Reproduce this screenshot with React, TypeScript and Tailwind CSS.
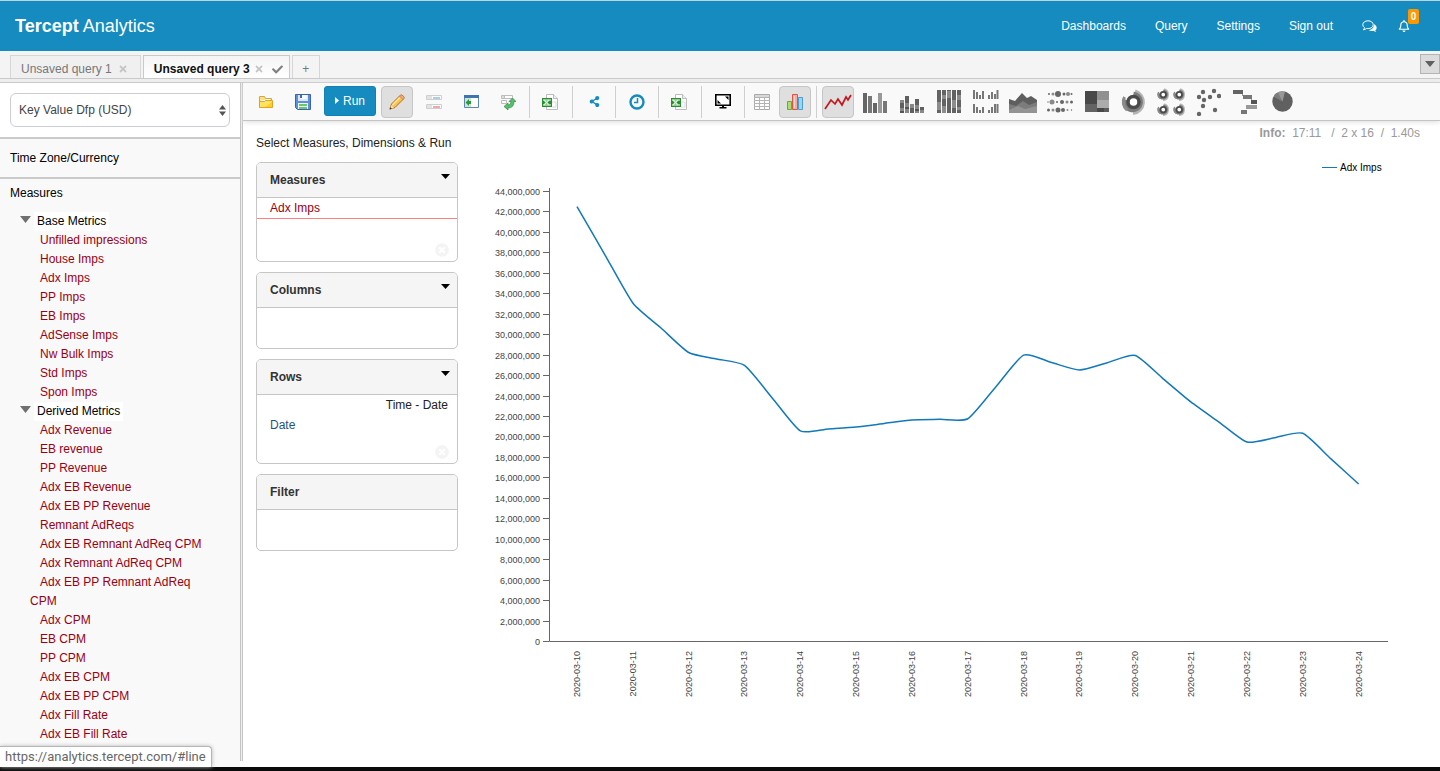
import React from 'react';
import clsx from 'clsx';
import { FaCheck, FaRegBell, FaShareAlt, FaTimes, FaTimesCircle } from 'react-icons/fa';

const baseMetrics = [
  'Unfilled impressions',
  'House Imps',
  'Adx Imps',
  'PP Imps',
  'EB Imps',
  'AdSense Imps',
  'Nw Bulk Imps',
  'Std Imps',
  'Spon Imps',
];

const derivedMetrics = [
  'Adx Revenue',
  'EB revenue',
  'PP Revenue',
  'Adx EB Revenue',
  'Adx EB PP Revenue',
  'Remnant AdReqs',
  'Adx EB Remnant AdReq CPM',
  'Adx Remnant AdReq CPM',
  'Adx EB PP Remnant AdReq CPM',
  'Adx CPM',
  'EB CPM',
  'PP CPM',
  'Adx EB CPM',
  'Adx EB PP CPM',
  'Adx Fill Rate',
  'Adx EB Fill Rate',
];

// Adx Imps per day, in millions
const series = [
  { date: '2020-03-10', value: 42.53 },
  { date: '2020-03-11', value: 33.1 },
  { date: '2020-03-12', value: 28.26 },
  { date: '2020-03-13', value: 26.99 },
  { date: '2020-03-14', value: 20.6 },
  { date: '2020-03-15', value: 20.97 },
  { date: '2020-03-16', value: 21.66 },
  { date: '2020-03-17', value: 21.78 },
  { date: '2020-03-18', value: 28.0 },
  { date: '2020-03-19', value: 26.55 },
  { date: '2020-03-20', value: 27.97 },
  { date: '2020-03-21', value: 23.4 },
  { date: '2020-03-22', value: 19.5 },
  { date: '2020-03-23', value: 20.36 },
  { date: '2020-03-24', value: 15.4 },
];

/* ---------- toolbar icons ---------- */

function FolderIcon() {
  return (
    <svg width="16" height="16" viewBox="0 0 16 16">
      <path d="M1.5 13.5v-11h5l1 2h6v9z" fill="#fbe08a" stroke="#d9a436" />
      <path d="M3 6.5h4l1-1h4" fill="none" stroke="#fff" />
      <path d="M1.5 13.5v-6h5l1-1h7v7z" fill="#ffe25e" stroke="#dfa22c" />
      <path d="M7 13l7-5v5z" fill="#ffcf1f" />
    </svg>
  );
}

function SaveIcon() {
  return (
    <svg width="16" height="16" viewBox="0 0 16 16">
      <path d="M.5.5h15v15h-13l-2-2z" fill="#5d8fdc" stroke="#3a62b0" />
      <path d="M3 1h10v6H3z" fill="#dce8fa" />
      <path d="M5 1h7v4H5z" fill="#f6f9ff" />
      <path d="M5 1h2v3H5z" fill="#3f68b5" />
      <path d="M3 9h10v6H3z" fill="#eef5ee" />
      <path d="M4 10h8v2H4zM4 13h8v2H4z" fill="#6cc66a" />
    </svg>
  );
}

function PencilIcon() {
  return (
    <svg width="16" height="16" viewBox="0 0 16 16">
      <path d="M1 15l1.5-5L11 1.5q1.5-1 3 .5t.5 3L6 13.5z" fill="#f8c34a" stroke="#b5712a" />
      <path d="M3.5 11L11 3.5" stroke="#ffe9a0" strokeWidth="1.5" />
      <path d="M10.5 2l3.5 3.5 1-1q.5-1.5-.8-2.7T11.5 1z" fill="#f0a890" stroke="#b5712a" strokeWidth=".6" />
      <path d="M1 15l1.3-4L5 13.700z" fill="#f3dcb4" />
      <path d="M.5 15.5l.8-2.3 1.5 1.5z" fill="#333" />
    </svg>
  );
}

function FieldsIcon() {
  return (
    <svg width="16" height="14" viewBox="0 0 16 14">
      <path d="M.5.5h15v4H.5zM.5 9.5h15v4H.5z" fill="#fff" stroke="#cfcfcf" />
      <path d="M1 1h5v3H1zM1 10h5v3H1z" fill="#e2e2e2" />
      <path d="M7 2h7v2H7z" fill="#a9cfea" />
      <path d="M7 11h7v2H7z" fill="#f0a8a8" />
    </svg>
  );
}

function CollapseIcon() {
  return (
    <svg width="15" height="13" viewBox="0 0 15 13">
      <path d="M.5.5h14v12H.5z" fill="#fff" stroke="#5b86b8" />
      <path d="M0 0h15v3H0z" fill="#3f74ad" />
      <path d="M1 3h6v9H1z" fill="#cfe6cf" />
      <path d="M1.5 7.5L5 4v2h2v3H5v2z" fill="#2a9a3a" />
    </svg>
  );
}

function SwapIcon() {
  return (
    <svg width="16" height="16" viewBox="0 0 16 16">
      <path d="M1.5 1.5h11v3h-11zM1.5 6.5h5v3h-5zM4.5 1.5v3" fill="#fff" stroke="#bdbdbd" />
      <path d="M2 2h2v2H2z" fill="#ddd" />
      <path d="M4 12.5L8 9v2q3 0 3-3.5H9L12.5 4 16 7.5h-2Q14 14 8 14v2z" fill="#58bd6c" stroke="#2f8f48" strokeWidth=".7" />
    </svg>
  );
}

function ExcelIcon() {
  return (
    <svg width="18" height="16" viewBox="0 0 18 16">
      <path d="M4.5.5h7l4 4v11h-11z" fill="#fff" stroke="#bcbcbc" />
      <path d="M11.5.5v4h4" fill="#eee" stroke="#bcbcbc" />
      <path d="M10 8h4v5h-4" fill="none" stroke="#d4e2d4" />
      <path d="M0 4h10v9H0z" fill="#2c8b35" />
      <path d="M1 5h8v2H1zM1 10h8v2H1z" fill="#8fcb8d" />
      <path d="M2 6l5 5M7 6l-5 5" stroke="#d9efd9" strokeWidth="1.4" />
    </svg>
  );
}

function ClockIcon() {
  return (
    <svg width="16" height="16" viewBox="0 0 16 16" fill="none" stroke="#158bc0">
      <circle cx="8" cy="8" r="6.5" strokeWidth="2.4" />
      <path d="M8.500 4v4.500H5" strokeWidth="1.5" />
    </svg>
  );
}

function FullscreenIcon() {
  return (
    <svg width="16" height="15" viewBox="0 0 16 15">
      <path d="M.8.8h14.4v10.4H.8z" fill="#fff" stroke="#000" strokeWidth="1.6" />
      <path d="M10 2.500h3.500V6zM2.500 6v3.500H6z" fill="#000" />
      <path d="M7 11h2v2h2.5v1.5h-7V13H7z" fill="#000" />
    </svg>
  );
}

function TableIcon() {
  return (
    <svg width="16" height="16" viewBox="0 0 16 16">
      <path d="M.5.5h15v15H.5z" fill="#fff" stroke="#aaa" />
      <path d="M1 1h14v2H1z" fill="#d8d8d8" />
      <path d="M0 3.5h16M0 6.5h16M0 9.5h16M0 12.5h16M5.5 3v13M10.5 3v13" stroke="#b4b4b4" />
    </svg>
  );
}

function ColorBarsIcon() {
  return (
    <svg width="16" height="16" viewBox="0 0 16 16">
      <path d="M.5 7.5h4v8h-4z" fill="#a4e070" stroke="#5fae35" />
      <path d="M11.5 3.5h4v12h-4z" fill="#9bd5f2" stroke="#4a9fd0" />
      <path d="M5.5.5h5v15h-5z" fill="#fbaaa0" stroke="#d9564a" />
      <path d="M7.5 2v12" stroke="#fdd6d0" />
    </svg>
  );
}

function LineIcon() {
  return (
    <svg width="28" height="18" viewBox="0 0 28 18">
      <path d="M1 16l6-9 4 4 3-5 4 6 4-8 2 3 3-5" fill="none" stroke="#c4161c" strokeWidth="1.7" />
    </svg>
  );
}

function BarIcon() {
  return (
    <svg width="24" height="23" viewBox="0 -3 24 23">
      <path d="M0 0h4v20H0zM10 10h4v10h-4z" fill="#666" />
      <path d="M5 3h4v17H5zM20 8h4v12h-4z" fill="#777" />
      <path d="M15 0h4v20h-4z" fill="#999" />
    </svg>
  );
}

function StackedBarIcon() {
  return (
    <svg width="24" height="23" viewBox="0 -5 24 23">
      <path d="M0 5h4v13H0zM5 1h4v17H5zM10 9h4v9h-4zM15 4h4v14h-4zM20 12h4v6h-4z" fill="#888" />
      <path d="M0 8h4v5H0zM5 1h4v7H5zM10 13h4v5h-4zM15 4h4v6h-4zM20 12h4v3h-4z" fill="#606060" />
      <path d="M5 12h4v2H5zM15 14h4v2h-4zM0 16h4v2H0z" fill="#555" />
    </svg>
  );
}

function FullBarIcon() {
  return (
    <svg width="24" height="23" viewBox="0 0 24 23">
      <path d="M0 0h4v23H0zM5 0h4v23H5zM10 0h4v23h-4zM15 0h4v23h-4zM20 0h4v23h-4z" fill="#636363" />
      <path d="M0 12h4v8H0zM5 5h4v4H5zM5 16h4v7H5zM10 1h4v7h-4zM15 10h4v8h-4zM20 5h4v5h-4zM20 17h4v3h-4z" fill="#8c8c8c" />
    </svg>
  );
}

function MultiBarIcon() {
  return (
    <svg width="26" height="23" viewBox="0 0 26 23">
      <path
        d="M0 0h2v9H0zM3 2h2v7H3zM6 5h2v4H6zM9 1h2v8H9zM15 5h2v4h-2zM18 2h2v7h-2zM21 4h2v5h-2zM23.5 0h2v9h-2zM0 14h2v9H0zM3 17h2v6H3zM6 20h2v3H6zM9 17h2v6H9zM15 20h2v3h-2zM18 17h2v6h-2zM21 14h2v9h-2zM23.5 14h2v9h-2z"
        fill="#777"
      />
    </svg>
  );
}

function AreaIcon() {
  return (
    <svg width="28" height="23" viewBox="0 -3 28 23">
      <path d="M0 6l6 2 7-8 5 5 4-2 6 4v13H0z" fill="#5e5e5e" />
      <path d="M0 11l7 2 7-5 6 4 8-3v11H0z" fill="#7c7c7c" />
      <path d="M0 17l9-4 7 3 12-3v7H0z" fill="#949494" />
    </svg>
  );
}

function DotGridIcon() {
  const dots = [
    [2, 3, 1], [6, 3, 1.5], [11, 3, 3], [17, 3, 1.5], [21, 3, 2], [24.5, 3, 1],
    [1, 11, 0.7], [5, 11, 2.5], [10, 11, 1], [15, 11, 2], [20, 11, 1.5], [24.5, 11, 1.5],
    [1.5, 19, 1.5], [6, 19, 1.5], [11, 19, 2.5], [16, 19, 2], [20.5, 19, 1], [24.5, 19, 0.7],
  ];
  return (
    <svg width="26" height="22" viewBox="0 0 26 22">
      {dots.map(([cx, cy, r], i) => (
        <circle key={i} cx={cx} cy={cy} r={r} fill={i % 3 === 1 ? '#8a8a8a' : '#666'} />
      ))}
    </svg>
  );
}

function TreemapIcon() {
  return (
    <svg width="24" height="21" viewBox="0 0 24 21">
      <path d="M0 0h12v13H0z" fill="#484848" />
      <path d="M0 13h12v8H0z" fill="#636363" />
      <path d="M12 0h12v9H12z" fill="#919191" />
      <path d="M12 9h12v8H12z" fill="#acacac" />
      <path d="M12 17h7v4h-7z" fill="#484848" />
      <path d="M19 17h5v4h-5z" fill="#5c5c5c" />
    </svg>
  );
}

function SunburstIcon({ size }: { size: number }) {
  return (
    <svg width={size} height={size} viewBox="0 0 26 26" fill="none">
      <path d="M14 2.500a11 11 0 0 1-2 21.500" stroke="#b5b5b5" strokeWidth="4" />
      <path d="M12.500 5a8 8 0 1 1-8.500 5.500" stroke="#7c7c7c" strokeWidth="4.500" />
      <path d="M3.5 8A10.500 10.500 0 0 0 6 21" stroke="#8b8b8b" strokeWidth="3" />
      <circle cx="12.500" cy="13" r="5.500" stroke="#4a4a4a" strokeWidth="3.500" fill="#fff" />
    </svg>
  );
}

function MultiSunburstIcon() {
  return (
    <span className="grid grid-cols-2 gap-x-[3px] gap-y-0.5">
      <SunburstIcon size={13} />
      <SunburstIcon size={13} />
      <SunburstIcon size={13} />
      <SunburstIcon size={13} />
    </span>
  );
}

function ScatterIcon() {
  const dots = [[7, 4], [18, 3], [3, 9], [14, 9], [23, 8], [8, 12], [7, 18], [19, 22], [3, 26]];
  return (
    <svg width="25" height="28" viewBox="0 0 25 28">
      {dots.map(([cx, cy]) => (
        <circle key={`${cx}-${cy}`} cx={cx} cy={cy} r="2.2" fill="#666" />
      ))}
    </svg>
  );
}

function WaterfallIcon() {
  return (
    <svg width="24" height="24" viewBox="0 0 24 24">
      <path d="M9 4h1v2H9zM18 9h1v3h-1z" fill="#999" />
      <path d="M0 0h10v4H0z" fill="#646464" />
      <path d="M10 5h9v4h-9z" fill="#777" />
      <path d="M18 10h6v4h-6z" fill="#555" />
      <path d="M13 15h11v4H13z" fill="#999" />
      <path d="M8 20h6v4H8z" fill="#777" />
    </svg>
  );
}

function PieIcon() {
  return (
    <svg width="21" height="21" viewBox="0 0 21 21">
      <circle cx="10.5" cy="10.5" r="10.2" fill="#606060" />
      <path d="M10.5 10.5L1.5 5.5A10.2 10.2 0 0 1 7.5.8z" fill="#7e7e7e" />
      <path d="M10.5 10.5L6 1.3A10.2 10.2 0 0 1 13 .6z" fill="#999" />
    </svg>
  );
}

function ChatIcon() {
  return (
    <svg width="15" height="13" viewBox="0 0 15 13">
      <path d="M12 4q2.700 1.500 2.700 3.500t-1.400 2.700q.3 1 1.200 1.600-1.800.2-3-1-2.600.6-4.700-.6Q12 9.500 12 4z" fill="#fff" />
      <path d="M6 .8c3 0 5.200 1.700 5.200 3.900S9 8.600 6 8.600q-.8 0-1.500-.1Q3 9.700 1.300 9.800 2.300 9 2.500 7.700.8 6.500.8 4.700C.8 2.500 3 .8 6 .8z" fill="#158bc0" stroke="#fff" />
    </svg>
  );
}

/* ---------- toolbar ---------- */

type ToolButtonProps = {
  label: string;
  active?: boolean;
  narrow?: boolean;
  children: React.ReactNode;
};

function ToolButton({ label, active, narrow, children }: ToolButtonProps) {
  return (
    <button
      type="button"
      aria-label={label}
      title={label}
      className={clsx(
        'h-8 shrink-0 flex items-center justify-center rounded border',
        narrow ? 'w-6' : 'w-8',
        active ? 'bg-[#dfdfdf] border-[#c6c6c6]' : 'border-transparent'
      )}
    >
      {children}
    </button>
  );
}

function Separator() {
  return <span className="w-px h-8 shrink-0 bg-[#cfcfcf]" />;
}

function Toolbar() {
  return (
    <div className="h-[38px] shrink-0 flex items-center gap-[5px] pl-[7px] bg-[#f9f9f9] border-b border-[#c4c4c4] shadow-[0_1px_5px_#ddd] overflow-hidden">
      <ToolButton label="Open query"><FolderIcon /></ToolButton>
      <ToolButton label="Save query"><SaveIcon /></ToolButton>
      <button type="button" className="h-[30px] w-[52px] mb-0.5 shrink-0 flex items-center justify-center gap-1 rounded-[3px] bg-[#158bc0] border border-[#1280b2] text-white">
        <svg width="4" height="7" viewBox="0 0 4 7"><path d="M0 0l4 3.5L0 7z" fill="#fff" /></svg>
        Run
      </button>
      <ToolButton label="Edit" active><PencilIcon /></ToolButton>
      <ToolButton label="Toggle fields"><FieldsIcon /></ToolButton>
      <ToolButton label="Toggle sidebar"><CollapseIcon /></ToolButton>
      <ToolButton label="Swap axis"><SwapIcon /></ToolButton>
      <Separator />
      <ToolButton label="Export XLS"><ExcelIcon /></ToolButton>
      <Separator />
      <ToolButton label="Share"><FaShareAlt size={11} color="#158bc0" /></ToolButton>
      <Separator />
      <ToolButton label="Schedule"><ClockIcon /></ToolButton>
      <Separator />
      <ToolButton label="Export report"><ExcelIcon /></ToolButton>
      <Separator />
      <ToolButton label="Full screen"><FullscreenIcon /></ToolButton>
      <Separator />
      <ToolButton label="Table mode" narrow><TableIcon /></ToolButton>
      <ToolButton label="Chart mode" active><ColorBarsIcon /></ToolButton>
      <Separator />
      <ToolButton label="Line" active><LineIcon /></ToolButton>
      <ToolButton label="Bar"><BarIcon /></ToolButton>
      <ToolButton label="Stacked bar"><StackedBarIcon /></ToolButton>
      <ToolButton label="100% bar"><FullBarIcon /></ToolButton>
      <ToolButton label="Multiple bar"><MultiBarIcon /></ToolButton>
      <ToolButton label="Area"><AreaIcon /></ToolButton>
      <ToolButton label="Dot grid"><DotGridIcon /></ToolButton>
      <ToolButton label="Treemap"><TreemapIcon /></ToolButton>
      <ToolButton label="Sunburst"><SunburstIcon size={26} /></ToolButton>
      <ToolButton label="Multiple sunburst"><MultiSunburstIcon /></ToolButton>
      <ToolButton label="Scatter"><ScatterIcon /></ToolButton>
      <ToolButton label="Waterfall"><WaterfallIcon /></ToolButton>
      <ToolButton label="Pie"><PieIcon /></ToolButton>
    </div>
  );
}

/* ---------- header and tabs ---------- */

function Header() {
  return (
    <header className="h-[51px] shrink-0 flex items-center justify-between pl-[15px] pr-5 bg-[#158bc0] border-t border-[#b9d3df] text-white">
      <h1 className="text-[18px]">
        <b>Tercept</b> Analytics
      </h1>
      <nav className="flex items-center gap-[29px]">
        <a href="#dashboards">Dashboards</a>
        <a href="#query">Query</a>
        <a href="#settings">Settings</a>
        <a href="#signout">Sign out</a>
        <a href="#chat" aria-label="Messages"><ChatIcon /></a>
        <a href="#alerts" aria-label="Alerts" className="relative -ml-2 mr-2.5">
          <FaRegBell size={12} />
          <span className="absolute left-2.5 -top-[11px] w-[11px] h-[15px] rounded-xs bg-[#ff9800] text-[10px] leading-[15px] text-center font-bold">
            0
          </span>
        </a>
      </nav>
    </header>
  );
}

function Tabs() {
  return (
    <div className="h-7 shrink-0 flex items-end justify-between bg-[#f4f4f4] border-b border-[#c9c9c9]">
      <div className="flex items-stretch gap-0.5 h-[23px] pl-2.5">
        <button type="button" className="flex items-center gap-1.5 pt-1 pl-2.5 pr-3 border border-b-0 border-[#d6d6d6] bg-[#f0f0f0] text-[#777]">
          Unsaved query 1
          <FaTimes size={10} color="#c4c4c4" />
        </button>
        <button type="button" className="flex items-center gap-1 pt-1 pl-2.5 pr-1.5 border border-b-0 border-[#c9c9c9] bg-gradient-to-b from-[#f4f4f4] to-white text-[#111] font-bold">
          Unsaved query 3
          <FaTimes size={10} color="#c4c4c4" />
          <FaCheck size={11} color="#808080" className="ml-1" />
        </button>
        <button type="button" className="w-7 pt-1 border border-b-0 border-[#d6d6d6] text-[#777]">+</button>
      </div>
      <button type="button" aria-label="All tabs" className="w-5 h-5 mb-1 flex items-center justify-center bg-[#dcdcdc] border border-[#b4b4b4]">
        <svg width="10" height="6" viewBox="0 0 10 6"><path d="M0 0h10L5 6z" fill="#606060" /></svg>
      </button>
    </div>
  );
}

/* ---------- sidebar ---------- */

function MetricGroup({ title, items }: { title: string; items: string[] }) {
  return (
    <li>
      <div className="flex items-center h-[19px] pl-5 text-black">
        <svg width="11" height="7" viewBox="0 0 11 7" className="mb-1"><path d="M0 0h11L5.5 7z" fill="#707070" /></svg>
        <a href={`#${title}`} className="ml-[3px] px-[3px] bg-white">{title}</a>
      </div>
      <ul className="pl-[30px] pr-6">
        {items.map((item) => (
          <li key={item} className="indent-2.5">
            <a href={`#${item}`} className="text-[#990011]">{item}</a>
          </li>
        ))}
      </ul>
    </li>
  );
}

function Sidebar() {
  return (
    <aside className="w-60 shrink-0 flex flex-col bg-[#f9f9f9] overflow-hidden">
      <div className="relative p-2.5 bg-white border-b-2 border-[#cbcbcb]">
        <select aria-label="Cube" className="w-full h-[34px] pl-2 appearance-none rounded-md border border-[#ccccd8] bg-white text-[#444]">
          <option>Key Value Dfp (USD)</option>
        </select>
        <svg width="7" height="11" viewBox="0 0 7 11" className="absolute right-3.5 top-[22px] pointer-events-none">
          <path d="M0 4.5h7L3.5 0zM0 6.5h7L3.5 11z" fill="#555" />
        </svg>
      </div>
      <h2 className="h-10 shrink-0 flex items-center pl-2.5 border-b-2 border-[#cbcbcb] text-black">Time Zone/Currency</h2>
      <h2 className="h-[33px] shrink-0 flex items-center pl-2.5 pb-1.5 text-black">Measures</h2>
      <ul className="min-h-0 overflow-hidden leading-[19px]">
        <MetricGroup title="Base Metrics" items={baseMetrics} />
        <MetricGroup title="Derived Metrics" items={derivedMetrics} />
      </ul>
    </aside>
  );
}

/* ---------- query fields ---------- */

type FieldPanelProps = {
  title: string;
  caret?: boolean;
  clearable?: boolean;
  children?: React.ReactNode;
};

function FieldPanel({ title, caret = true, clearable, children }: FieldPanelProps) {
  return (
    <section className="rounded-[5px] border border-[#c6c6c6] overflow-hidden">
      <div className="h-[35px] flex justify-between pl-[13px] pr-[7px] bg-[#f5f5f5] border-b border-[#c6c6c6]">
        <h3 className="leading-[34px] font-bold text-[#333]">{title}</h3>
        {caret && (
          <svg width="9" height="5" viewBox="0 0 9 5" className="mt-[11px]"><path d="M0 0h9L4.5 5z" /></svg>
        )}
      </div>
      <div className="min-h-10 flex flex-col">
        {children}
        {clearable && (
          <button type="button" aria-label={`Clear ${title}`} className="self-end mt-6 mb-1 mr-2">
            <FaTimesCircle size={14} color="#f4f4f4" />
          </button>
        )}
      </div>
    </section>
  );
}

function Fields() {
  return (
    <div className="w-[202px] shrink-0 flex flex-col gap-2.5">
      <p className="h-[31px] pt-3 leading-5 text-[#222]">Select Measures, Dimensions &amp; Run</p>
      <FieldPanel title="Measures" clearable>
        <div className="h-[21px] pl-[13px] leading-5 border-b border-[#ff8080]">
          <a href="#adx-imps" className="text-[#990011]">Adx Imps</a>
        </div>
      </FieldPanel>
      <FieldPanel title="Columns" />
      <FieldPanel title="Rows" clearable>
        <span className="self-end pr-[9px] leading-5 text-[#222]">Time - Date</span>
        <a href="#date" className="-mb-3.5 pl-[13px] leading-5 text-[#1f5380]">Date</a>
      </FieldPanel>
      <FieldPanel title="Filter" caret={false} />
    </div>
  );
}

/* ---------- chart ---------- */

const AXIS_X = 79;
const ZERO_Y = 496.5;
const PX_PER_MILLION = 450 / 44;

const yOf = (value: number) => ZERO_Y - value * PX_PER_MILLION;
const xOf = (index: number) => 107 + index * 55.83;

// Cardinal spline through every day and the midpoint between days
function linePath() {
  const pts: number[][] = [];
  series.forEach((point, i) => {
    if (i > 0) {
      pts.push([xOf(i - 0.5), yOf((series[i - 1].value + point.value) / 2)]);
    }
    pts.push([xOf(i), yOf(point.value)]);
  });
  const tangent = (i: number) => {
    const a = pts[Math.max(i - 1, 0)];
    const b = pts[Math.min(i + 1, pts.length - 1)];
    return [(b[0] - a[0]) * 0.1, (b[1] - a[1]) * 0.1];
  };
  let d = `M${pts[0].join()}`;
  for (let i = 1; i < pts.length; i++) {
    const [p, q] = [pts[i - 1], pts[i]];
    const [s, t] = [tangent(i - 1), tangent(i)];
    d += `C${p[0] + s[0]},${p[1] + s[1]},${q[0] - t[0]},${q[1] - t[1]},${q.join()}`;
  }
  return d;
}

function LineChart() {
  const ticks = Array.from({ length: 23 }, (_, i) => i * 2);
  return (
    <svg viewBox="0 0 970 560" className="w-full h-auto" role="img" aria-label="Adx Imps by date">
      <path d="M852 22.5h15" stroke="#1777b8" />
      <text x="870" y="26" fontSize="10" fill="#000">Adx Imps</text>
      <path d={`M${AXIS_X + 0.5} 43V${ZERO_Y}H918`} fill="none" stroke="#666" />
      {ticks.map((tick) => (
        <g key={tick}>
          <path d={`M${AXIS_X - 6} ${Math.floor(yOf(tick)) + 0.5}h6`} stroke="#666" />
          <text x="70" y={Math.floor(yOf(tick)) + 4} fontSize="9" fill="#444" textAnchor="end">
            {tick === 0 ? '0' : `${tick},000,000`}
          </text>
        </g>
      ))}
      {series.map((point, i) => (
        <text key={point.date} transform={`translate(${Math.round(xOf(i)) + 3} 506) rotate(-90)`} fontSize="9" fill="#444" textAnchor="end">
          {point.date}
        </text>
      ))}
      <path d={linePath()} fill="none" stroke="#1179b9" strokeWidth="1.5" />
    </svg>
  );
}

export default function App() {
  return (
    <div className="relative h-screen flex flex-col bg-white text-[12px] font-['Liberation_Sans',Arial,sans-serif]">
      <Header />
      <Tabs />
      <div className="h-1 shrink-0 bg-[#eee] border-b border-[#c9c9c9]" />
      <div className="flex-1 min-h-0 flex">
        <Sidebar />
        <div className="w-[3px] mb-1.5 shrink-0 bg-[#eee] border-x border-[#c4c4c4]" />
        <main className="flex-1 min-w-0 flex flex-col">
          <Toolbar />
          <div className="flex-1 min-h-0 flex gap-3 pl-[13px]">
            <Fields />
            <div className="flex-1 min-w-0">
              <p className="h-6 pr-5 leading-6 text-right text-[#999] whitespace-pre">
                <b>Info:</b>{'  17:11   /  2 x 16  /  1.40s'}
              </p>
              <LineChart />
            </div>
          </div>
        </main>
      </div>
      <div className="h-1 shrink-0 bg-[#0a0a0a]" />
      <div className="absolute left-0 bottom-1 h-[21px] px-[5px] leading-5 bg-white border-t border-r border-[#b5b5b5] rounded-tr shadow-[0_0_4px_#bbb] text-[13px] text-[#666] font-['Roboto',sans-serif]">
        https://analytics.tercept.com/#line
      </div>
    </div>
  );
}
